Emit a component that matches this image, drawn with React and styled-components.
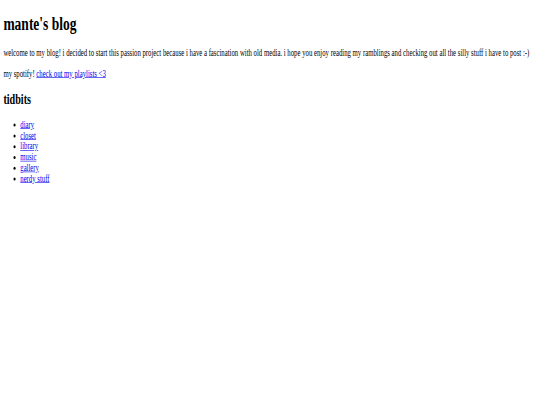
import React from "react";
import styled, { createGlobalStyle } from "styled-components";

const GlobalStyle = createGlobalStyle`
  html, body {
    margin: 0;
    padding: 0;
    background: #ffffff;
    overflow: hidden;
  }
`;

// the reference is a wide page squeezed into the window,
// so the whole page is laid out wide and scaled down
const Squeeze = styled.div`
  display: flow-root;
  width: 1280px;
  transform: scale(0.421875, 0.6);
  transform-origin: 0 0;
`;

const Page = styled.div`
  padding: 0 8px;
  font-family: "Liberation Serif", "Times New Roman", serif;
  font-size: 16px;
  color: #000000;
`;

const Title = styled.h1`
  font-size: 32px;
  font-weight: bold;
  margin: 21.44px 0;
`;

const Text = styled.p`
  margin: 16px 0;
`;

const SubTitle = styled.h2`
  font-size: 24px;
  font-weight: bold;
  margin: 19.92px 0;
`;

const List = styled.ul`
  margin: 16px 0;
  padding-left: 40px;
  list-style: disc;
`;

const Link = styled.a`
  color: #0000ee;
  text-decoration: underline;
`;

const tidbits = ["diary", "closet", "library", "music", "gallery", "nerdy stuff"];

function App() {
  return (
    <>
      <GlobalStyle />
      <Squeeze>
        <Page>
          <Title>mante's blog</Title>
          <Text>
            welcome to my blog! i decided to start this passion project because i
            have a fascination with old media. i hope you enjoy reading my
            ramblings and checking out all the silly stuff i have to post :-)
          </Text>
          <Text>
            my spotify! <Link href="#">check out my playlists &lt;3</Link>
          </Text>
          <SubTitle>tidbits</SubTitle>
          <List>
            {tidbits.map((t) => (
              <li key={t}>
                <Link href="#">{t}</Link>
              </li>
            ))}
          </List>
        </Page>
      </Squeeze>
    </>
  );
}

export default App;
